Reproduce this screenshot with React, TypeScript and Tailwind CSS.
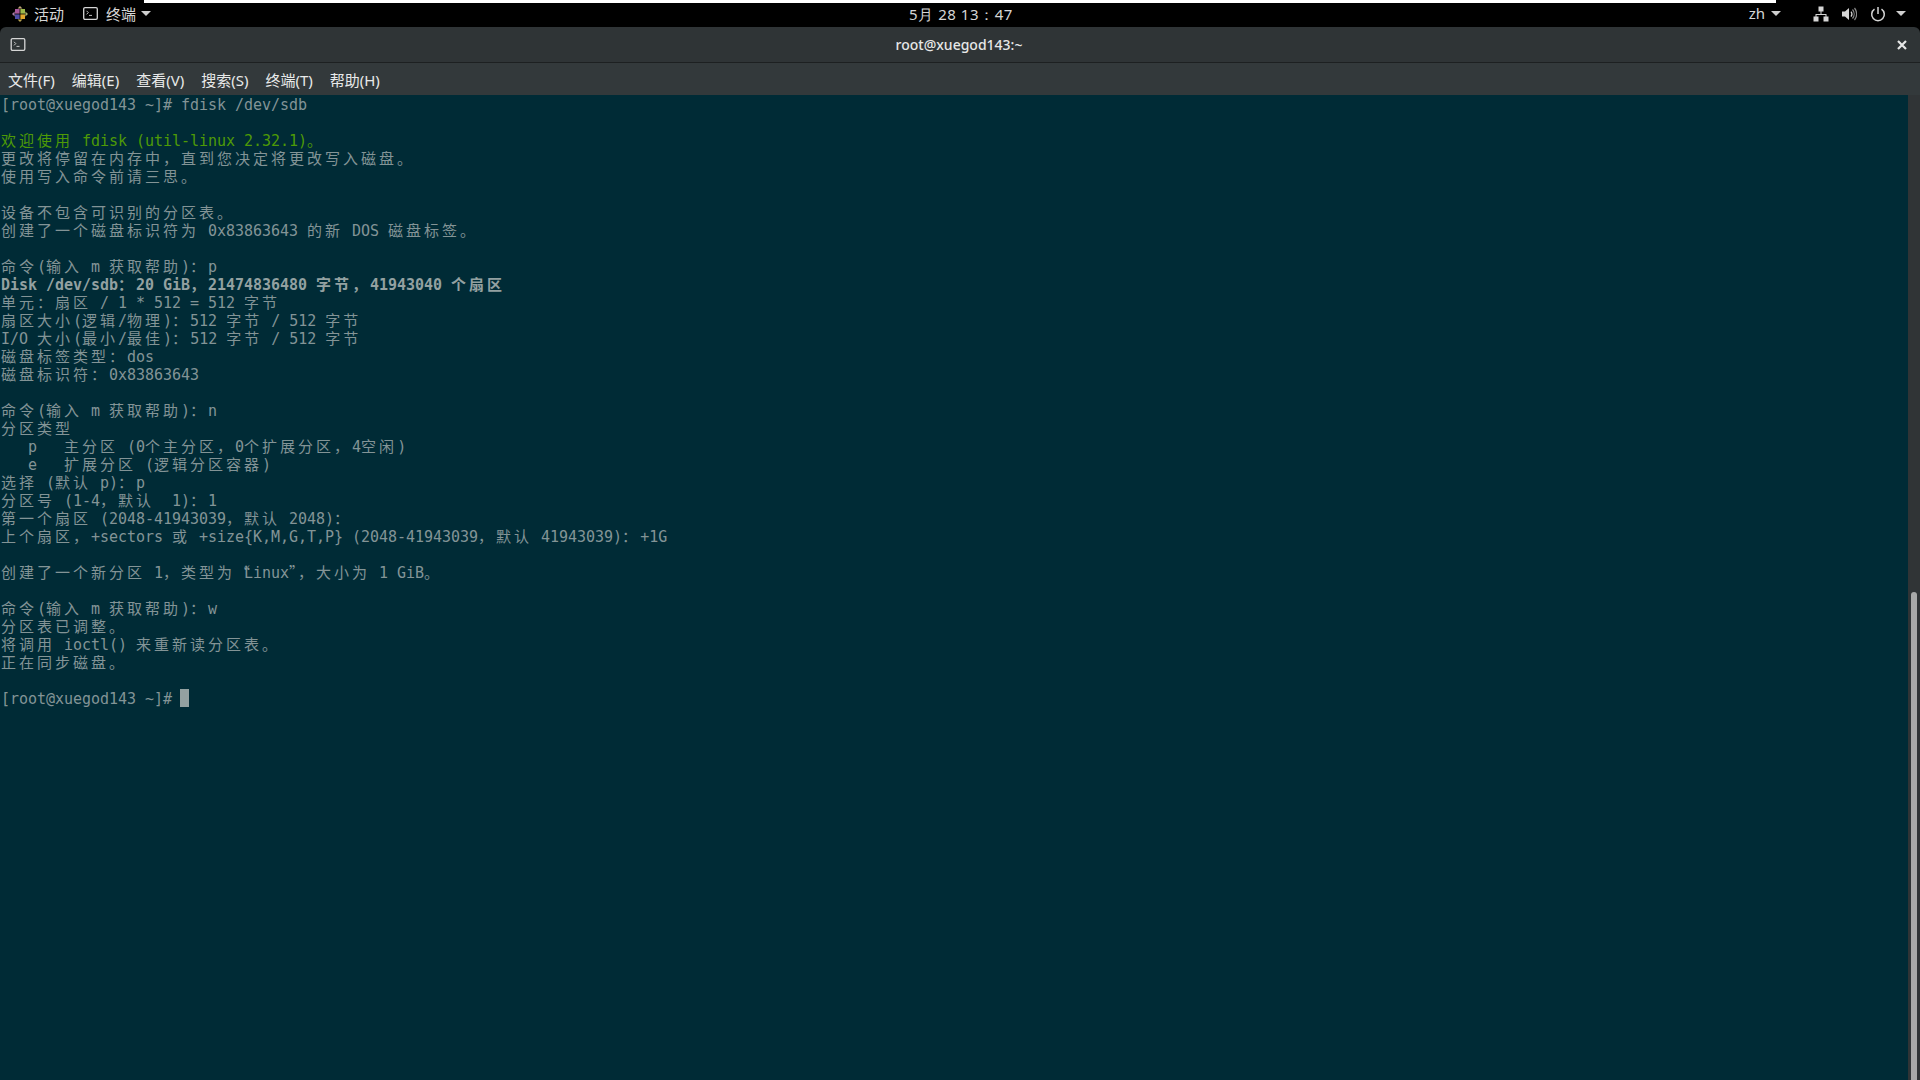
const mono = "font-['DejaVu_Sans_Mono','Noto_Sans_CJK_SC',monospace]";

const lines: string[] = [
  '[root@xuegod143 ~]# fdisk /dev/sdb',
  '',
  '欢迎使用 fdisk (util-linux 2.32.1)。',
  '更改将停留在内存中，直到您决定将更改写入磁盘。',
  '使用写入命令前请三思。',
  '',
  '设备不包含可识别的分区表。',
  '创建了一个磁盘标识符为 0x83863643 的新 DOS 磁盘标签。',
  '',
  '命令(输入 m 获取帮助)：p',
  'Disk /dev/sdb：20 GiB，21474836480 字节，41943040 个扇区',
  '单元：扇区 / 1 * 512 = 512 字节',
  '扇区大小(逻辑/物理)：512 字节 / 512 字节',
  'I/O 大小(最小/最佳)：512 字节 / 512 字节',
  '磁盘标签类型：dos',
  '磁盘标识符：0x83863643',
  '',
  '命令(输入 m 获取帮助)：n',
  '分区类型',
  '   p   主分区 (0个主分区，0个扩展分区，4空闲)',
  '   e   扩展分区 (逻辑分区容器)',
  '选择 (默认 p)：p',
  '分区号 (1-4，默认  1)：1',
  '第一个扇区 (2048-41943039，默认 2048)：',
  '上个扇区，+sectors 或 +size{K,M,G,T,P} (2048-41943039，默认 41943039)：+1G',
  '',
  '创建了一个新分区 1，类型为“Linux”，大小为 1 GiB。',
  '',
  '命令(输入 m 获取帮助)：w',
  '分区表已调整。',
  '将调用 ioctl() 来重新读分区表。',
  '正在同步磁盘。',
  '',
];

// every wide char sits in a 2-cell slot, same as the vte grid
function TermLine({ text }: { text: string }) {
  const runs = text.match(/[“”]|[\u2E80-\uFFFF]+|[^“”\u2E80-\uFFFF]+/g) ?? [];
  return (
    <>
      {runs.map((run, i) => {
        if (run === '“' || run === '”') {
          return (
            <span key={i} className="inline-block w-[9px] font-['Noto_Sans_CJK_SC',sans-serif]">
              {run}
            </span>
          );
        }
        if (/[\u2E80-\uFFFF]/.test(run)) {
          return (
            <span key={i} className="tracking-[3px] font-['Noto_Sans_CJK_SC',sans-serif]">
              {run}
            </span>
          );
        }
        return (
          <span key={i} className="tracking-[-0.03px]">
            {run}
          </span>
        );
      })}
    </>
  );
}

function CentosLogo() {
  return (
    <svg width="16" height="16" viewBox="0 0 16 16">
      <path d="M8 0l2.4 2.6H5.6z" fill="#c2a878" />
      <path d="M8 16l2.4-2.6H5.6z" fill="#b9a24e" />
      <path d="M0 8l2.6-2.4v4.8z" fill="#a97fa8" />
      <path d="M16 8l-2.6-2.4v4.8z" fill="#a9b070" />
      <rect x="3" y="3" width="4.6" height="4.6" fill="#a8589a" />
      <rect x="8.4" y="3" width="4.6" height="4.6" fill="#9cb84a" />
      <rect x="3" y="8.4" width="4.6" height="4.6" fill="#4e4ea6" />
      <rect x="8.4" y="8.4" width="4.6" height="4.6" fill="#e0a62c" />
    </svg>
  );
}

function TerminalIcon({ width = 15, height = 13 }: { width?: number; height?: number }) {
  return (
    <svg width={width} height={height} viewBox="0 0 15 13" fill="none">
      <rect x="0.7" y="0.7" width="13.6" height="11.6" rx="1.3" stroke="#d6d6d6" strokeWidth="1.3" />
      <path d="M3.5 3.8l1.8 1.8-1.8 1.8M6 8.4h3" stroke="#d6d6d6" strokeWidth="0.9" />
    </svg>
  );
}

function Caret() {
  return <span className="inline-block w-0 h-0 border-l-[5px] border-r-[5px] border-t-[5px] border-l-transparent border-r-transparent border-t-[#cfcfcf]" />;
}

function TopBar() {
  return (
    <div className="relative h-[27px] shrink-0 bg-black flex items-center justify-between text-[15px] text-[#d6d6d6] font-['Noto_Sans_CJK_SC',sans-serif]">
      <div className="absolute top-0 left-[144px] w-[1632px] h-[3px] bg-white" />
      <div className="flex items-center">
        <span className="ml-[12px] mr-[6px] flex">
          <CentosLogo />
        </span>
        <span className="pt-px">活动</span>
        <span className="ml-[19px] mr-[8px] flex">
          <TerminalIcon />
        </span>
        <span className="pt-px">终端</span>
        <span className="ml-[5px] flex">
          <Caret />
        </span>
      </div>
      <div className="absolute left-[909px] top-[5px] leading-[18px] font-['Noto_Sans',sans-serif] text-[15px] tracking-[0.55px]">
        5月 28 13：47
      </div>
      <div className="flex items-center">
        <span className="font-['Noto_Sans',sans-serif] mr-[6px]">zh</span>
        <Caret />
        <svg className="ml-[32px]" width="16" height="16" viewBox="0 0 16 16" fill="#d6d6d6">
          <rect x="5.5" y="0.5" width="5" height="5" />
          <rect x="0.5" y="10.5" width="5" height="5" />
          <rect x="10.5" y="10.5" width="5" height="5" />
          <path d="M7.5 5h1v3h5v3h-1V9H3.5v2h-1V8h5z" />
        </svg>
        <svg className="ml-[12px]" width="16" height="16" viewBox="0 0 16 16" fill="none">
          <path d="M1 5.5h3L8 2v12l-4-3.5H1z" fill="#d6d6d6" />
          <path d="M10 5.5a4 4 0 010 5" stroke="#d6d6d6" strokeWidth="1.2" />
          <path d="M11.5 3.5a7 7 0 010 9M13.5 2a9.5 9.5 0 010 12" stroke="#8a8a8a" strokeWidth="1.2" />
        </svg>
        <svg className="ml-[13px]" width="16" height="16" viewBox="0 0 16 16" fill="none" stroke="#d6d6d6" strokeWidth="1.5">
          <path d="M4.5 3.2a6.3 6.3 0 107 0" />
          <path d="M8 1v7" />
        </svg>
        <span className="ml-[10px] mr-[14px] flex">
          <Caret />
        </span>
      </div>
    </div>
  );
}

export default function App() {
  return (
    <div className="w-[1920px] h-[1080px] overflow-hidden bg-black flex flex-col">
      <TopBar />
      <div className="h-[36px] shrink-0 rounded-t-[6px] bg-[#2f3436] border-b border-[#1d2021] flex items-center">
        <span className="ml-[10px] flex">
          <TerminalIcon width={16} height={13} />
        </span>
        <div className="flex-1 pr-[5px] text-center text-[14px] font-medium text-[#e6e7e7] font-['Noto_Sans',sans-serif]">root@xuegod143:~</div>
        <svg className="mr-[13px]" width="10" height="10" viewBox="0 0 10 10" stroke="#e6e7e7" strokeWidth="2.2">
          <path d="M1 1l8 8M9 1l-8 8" />
        </svg>
      </div>
      <div className="h-[32px] shrink-0 pt-[2px] bg-[#33393b] flex items-center pl-[8px] gap-[17px] text-[15px] text-[#e8e9e9] font-['Noto_Sans','Noto_Sans_CJK_SC',sans-serif]">
        <span>文件(F)</span>
        <span>编辑(E)</span>
        <span>查看(V)</span>
        <span>搜索(S)</span>
        <span>终端(T)</span>
        <span>帮助(H)</span>
      </div>
      <div className="flex flex-1 min-h-0">
        <div className={`flex-1 pl-px bg-[#002b36] text-[#839496] text-[15px] leading-[18px] whitespace-pre ${mono}`}>
          {lines.map((line, i) => (
            <div key={i} className={`h-[18px] ${i === 0 ? 'pt-px' : ''} ${i === 2 ? 'text-[#4e9a06]' : ''} ${i === 10 ? 'font-bold text-[#93a1a1]' : ''}`}>
              <TermLine text={line} />
            </div>
          ))}
          <div className="h-[18px] flex items-center">
            <span className="pt-[2px] tracking-[-0.03px] -ml-px pl-px">[root@xuegod143 ~]# </span>
            <span className="w-[9px] h-[18px] -ml-px bg-[#93a1a1]" />
          </div>
        </div>
        <div className="w-[12px] shrink-0 bg-[#303436] flex justify-center pt-[497px]">
          <div className="w-[6px] h-full rounded-t-[3px] bg-[#a8a9a9]" />
        </div>
      </div>
    </div>
  );
}
